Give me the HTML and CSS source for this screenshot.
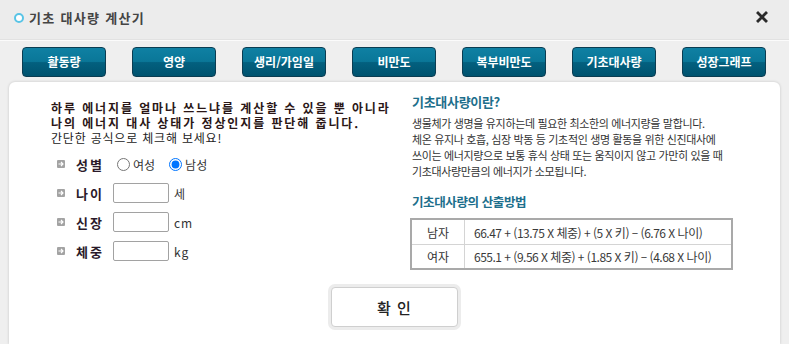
FILE: index.html
```html
<!DOCTYPE html>
<html lang="ko">
<head>
<meta charset="utf-8">
<title>기초 대사량 계산기</title>
<link rel="stylesheet" href="styles.css">
</head>
<body>
<div class="titlebar">
  <span class="title-dot"></span>
  <h1 class="title">기초 대사량 계산기</h1>
  <svg class="close" width="12" height="12" viewBox="0 0 12 12"><path d="M2 2 L10 10 M10 2 L2 10" stroke="#2a2a2a" stroke-width="2.8" stroke-linecap="square"/></svg>
</div>
<div class="divider"></div>
<nav class="tabs">
  <a class="tab">활동량</a>
  <a class="tab">영양</a>
  <a class="tab">생리/가임일</a>
  <a class="tab">비만도</a>
  <a class="tab">복부비만도</a>
  <a class="tab">기초대사량</a>
  <a class="tab">성장그래프</a>
</nav>
<main class="panel">
  <div class="cols">
    <section class="left">
      <p class="intro"><strong>하루 에너지를 얼마나 쓰느냐를 계산할 수 있을 뿐 아니라<br>나의 에너지 대사 상태가 정상인지를 판단해 줍니다.</strong><br>간단한 공식으로 체크해 보세요!</p>
      <div class="row">
        <span class="bullet"><svg width="8" height="8" viewBox="0 0 8 8"><rect width="8" height="8" rx="1" fill="#a3a3a3"/><path d="M1.5 4 H6 M4 2 L6 4 L4 6" stroke="#fff" stroke-width="1.1" fill="none"/></svg></span>
        <span class="label">성별</span>
        <label class="radio"><input type="radio" name="sex">여성</label>
        <label class="radio"><input type="radio" name="sex" checked>남성</label>
      </div>
      <div class="row">
        <span class="bullet"><svg width="8" height="8" viewBox="0 0 8 8"><rect width="8" height="8" rx="1" fill="#a3a3a3"/><path d="M1.5 4 H6 M4 2 L6 4 L4 6" stroke="#fff" stroke-width="1.1" fill="none"/></svg></span>
        <span class="label">나이</span>
        <input class="field" type="text">
        <span class="unit">세</span>
      </div>
      <div class="row">
        <span class="bullet"><svg width="8" height="8" viewBox="0 0 8 8"><rect width="8" height="8" rx="1" fill="#a3a3a3"/><path d="M1.5 4 H6 M4 2 L6 4 L4 6" stroke="#fff" stroke-width="1.1" fill="none"/></svg></span>
        <span class="label">신장</span>
        <input class="field" type="text">
        <span class="unit">cm</span>
      </div>
      <div class="row">
        <span class="bullet"><svg width="8" height="8" viewBox="0 0 8 8"><rect width="8" height="8" rx="1" fill="#a3a3a3"/><path d="M1.5 4 H6 M4 2 L6 4 L4 6" stroke="#fff" stroke-width="1.1" fill="none"/></svg></span>
        <span class="label">체중</span>
        <input class="field" type="text">
        <span class="unit">kg</span>
      </div>
    </section>
    <section class="right">
      <h2 class="head">기초대사량이란?</h2>
      <p class="desc">생물체가 생명을 유지하는데 필요한 최소한의 에너지량을 말합니다.<br>체온 유지나 호흡, 심장 박동 등 기초적인 생명 활동을 위한 신진대사에<br>쓰이는 에너지량으로 보통 휴식 상태 또는 움직이지 않고 가만히 있을 때<br>기초대사량만큼의 에너지가 소모됩니다.</p>
      <h2 class="head head2">기초대사량의 산출방법</h2>
      <table class="formula">
        <tr class="r1"><th>남자</th><td>66.47 + (13.75 X 체중) + (5 X 키) – (6.76 X 나이)</td></tr>
        <tr class="r2"><th>여자</th><td>655.1 + (9.56 X 체중) + (1.85 X 키) – (4.68 X 나이)</td></tr>
      </table>
    </section>
  </div>
  <div class="actions">
    <button class="confirm" type="button">확 인</button>
  </div>
</main>
</body>
</html>
```
FILE: styles.css
```css
html, body {
  margin: 0;
  padding: 0;
}
body {
  width: 789px;
  height: 344px;
  overflow: hidden;
  background: #efefef;
  font-family: "Noto Sans CJK KR", "Noto Sans", sans-serif;
  color: #333;
}
.titlebar {
  height: 40px;
  background: #ececec;
  display: flex;
  align-items: center;
  padding: 0 21px 0 14px;
  box-sizing: border-box;
}
.title-dot {
  width: 6px;
  height: 6px;
  border: 2.5px solid #58c4e6;
  border-radius: 50%;
  background: #fff;
  margin-top: -4px;
}
.title {
  margin: -4px 0 0 5px;
  font-size: 13px;
  font-weight: bold;
  letter-spacing: 1.3px;
  color: #444;
  line-height: 16px;
  flex: 1;
}
.close {
  margin-top: -6px;
}
.divider {
  height: 1px;
  background: #fbfbfb;
  border-top: 1px solid #e2e2e2;
  margin-top: -1px;
}
.tabs {
  display: flex;
  gap: 26px;
  padding: 6px 0 0 22px;
  height: 30px;
}
.tab {
  width: 84px;
  height: 30px;
  box-sizing: border-box;
  border: 1px solid #0b3d52;
  border-radius: 4px;
  background: linear-gradient(#0f80a3 0%, #0a7798 48%, #03607f 52%, #00536f 100%);
  color: #fff;
  font-size: 12px;
  font-weight: bold;
  line-height: 28px;
  text-align: center;
}
.panel {
  margin: 5px 9px 0;
  height: 262px;
  background: #fff;
  border-radius: 6px 6px 0 0;
  box-shadow: 0 0 3px rgba(0, 0, 0, 0.18);
  padding: 12px 0 0;
  box-sizing: border-box;
}
.cols {
  display: grid;
  grid-template-columns: 361px 1fr;
  padding-left: 42px;
}
.left {
  padding-top: 6px;
}
.intro {
  margin: 0 0 9px;
  font-size: 12px;
  line-height: 15px;
  color: #222;
  letter-spacing: 0.8px;
  white-space: nowrap;
}
.intro strong {
  color: #2a1616;
  letter-spacing: 1.9px;
}
.row {
  display: flex;
  align-items: center;
  height: 20px;
  margin-bottom: 9px;
  padding-left: 6px;
  font-size: 12px;
}
.bullet {
  display: flex;
  width: 8px;
  height: 8px;
  margin-right: 11px;
}
.label {
  width: 37px;
  font-size: 13px;
  font-weight: bold;
  letter-spacing: 2px;
  color: #2a1a2a;
}
.radio {
  display: flex;
  align-items: center;
  margin-right: 10px;
  color: #333;
}
.radio input {
  width: 13px;
  height: 13px;
  margin: 0 3px 0 4px;
}
.field {
  width: 56px;
  height: 20px;
  box-sizing: border-box;
  border: 1px solid #a2a2a2;
  border-radius: 2px;
  padding: 0;
}
.unit {
  margin-left: 5px;
  color: #333;
  letter-spacing: 1px;
}
.right {
  padding-left: 0;
}
.head {
  margin: 0;
  font-size: 13px;
  line-height: 16px;
  font-weight: bold;
  color: #1d6f8c;
  letter-spacing: -0.3px;
}
.head2 {
  margin-top: 15px;
  font-size: 12.5px;
  letter-spacing: -0.4px;
}
.desc {
  margin: 5px 0 0;
  font-size: 11px;
  line-height: 16px;
  letter-spacing: -0.35px;
  color: #333;
  white-space: nowrap;
}
.formula {
  margin: 8px 0 0 -2px;
  width: 323px;
  border-collapse: collapse;
  border: 2px solid #a9a9a9;
  font-size: 12px;
  color: #333;
}
.formula th, .formula td {
  padding: 0;
  font-weight: normal;
  border-bottom: 1px solid #d4d4d4;
}
.formula .r1 th, .formula .r1 td {
  height: 24px;
}
.formula .r2 th, .formula .r2 td {
  height: 23px;
  border-bottom: 0;
}
.formula th {
  width: 52px;
  text-align: center;
  border-right: 1px solid #d4d4d4;
}
.formula td {
  padding-left: 9px;
  letter-spacing: -0.5px;
  color: #3a3a3a;
}
.actions {
  display: flex;
  justify-content: center;
  margin-top: 17px;
}
.confirm {
  width: 127px;
  height: 40px;
  background: #fff;
  border: 1px solid #cfcfcf;
  border-radius: 4px;
  box-shadow: 0 0 0 3px #ececec;
  font-family: "Noto Sans CJK KR", sans-serif;
  font-size: 15px;
  font-weight: 500;
  color: #222;
  letter-spacing: 1px;
  padding: 0;
}
```
